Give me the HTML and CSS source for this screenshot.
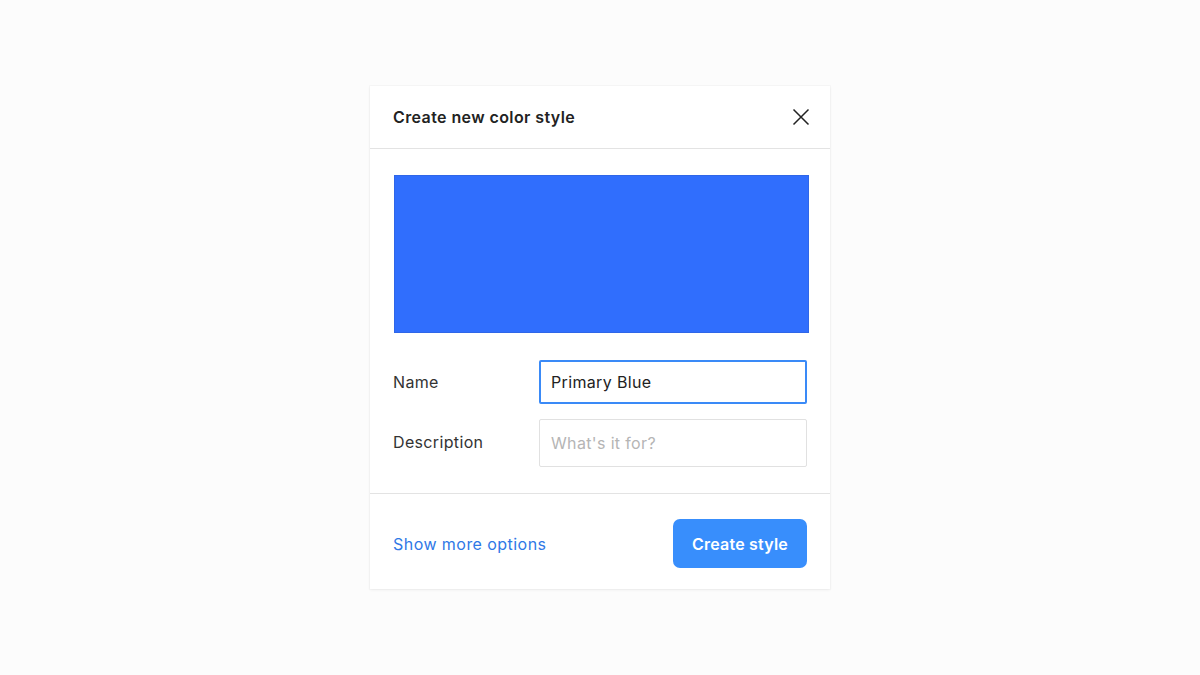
FILE: index.html
```html
<!DOCTYPE html>
<html lang="en">
<head>
<meta charset="utf-8">
<title>Create new color style</title>
<link rel="stylesheet" href="styles.css">
</head>
<body>
<div class="stage">
  <div class="dialog">
    <div class="dialog-header">
      <div class="dialog-title">Create new color style</div>
      <button class="close" aria-label="Close">
        <svg width="18" height="18" viewBox="0 0 18 18"><path d="M1.5 1.5 L16.5 16.5 M16.5 1.5 L1.5 16.5" stroke="#222" stroke-width="1.5" fill="none"/></svg>
      </button>
    </div>
    <div class="dialog-body">
      <div class="swatch"></div>
      <div class="form">
        <div class="row">
          <label class="label">Name</label>
          <div class="input focused">Primary Blue</div>
        </div>
        <div class="row">
          <label class="label">Description</label>
          <div class="input placeholder">What's it for?</div>
        </div>
      </div>
    </div>
    <div class="dialog-footer">
      <a class="link">Show more options</a>
      <button class="primary">Create style</button>
    </div>
  </div>
</div>
</body>
</html>
```
FILE: styles.css
```css
* { box-sizing: border-box; }
html, body { margin: 0; padding: 0; }
body {
  background: #fcfcfc;
  font-family: Inter, "Liberation Sans", sans-serif;
  color: #222;
  letter-spacing: 0.35px;
}
.stage {
  height: 675px;
  display: flex;
  align-items: center;
  justify-content: center;
}
.dialog {
  width: 460px;
  background: #fff;
  box-shadow: 0 1px 3px rgba(0,0,0,0.06), 0 0 0 1px rgba(0,0,0,0.02);
  display: flex;
  flex-direction: column;
}
.dialog-header {
  height: 63px;
  border-bottom: 1px solid #e3e3e3;
  display: flex;
  align-items: center;
  justify-content: space-between;
  padding: 0 20px 0 23px;
}
.dialog-title {
  font-size: 16px;
  font-weight: 600;
  color: #222;
  letter-spacing: 0.4px;
}
.close {
  border: 0;
  background: none;
  padding: 0;
  width: 18px;
  height: 18px;
  display: flex;
}
.dialog-body {
  padding: 26px 21px 26px 24px;
}
.swatch {
  height: 158px;
  background: #306efd;
  border: 1px solid #2f66e8;
}
.form {
  margin-top: 27px;
  padding-right: 2px;
  display: flex;
  flex-direction: column;
  gap: 15px;
}
.row {
  display: flex;
  align-items: center;
}
.label {
  width: 146px;
  margin-left: -1px;
  font-size: 16px;
  color: #333;
}
.row + .row .label { margin-top: -3px; }
.input {
  flex: 1;
  height: 48px;
  border: 1px solid #e1e1e1;
  border-radius: 2px;
  padding: 0 11px;
  display: flex;
  align-items: center;
  font-size: 16px;
  color: #222;
}
.input.focused {
  height: 44px;
  border: 2px solid #3a8af7;
  padding: 0 10px;
}
.input.placeholder { color: #b5b5b5; }
.dialog-footer {
  border-top: 1px solid #e3e3e3;
  padding: 25px 23px 21px 23px;
  display: flex;
  align-items: center;
  justify-content: space-between;
}
.link {
  font-size: 16px;
  color: #2f78e6;
  letter-spacing: 0.45px;
}
.primary {
  height: 49px;
  width: 134px;
  border: 0;
  border-radius: 7px;
  background: #388efc;
  color: #fff;
  font-family: Inter, "Liberation Sans", sans-serif;
  font-size: 16px;
  font-weight: 600;
  letter-spacing: 0.2px;
}
```
